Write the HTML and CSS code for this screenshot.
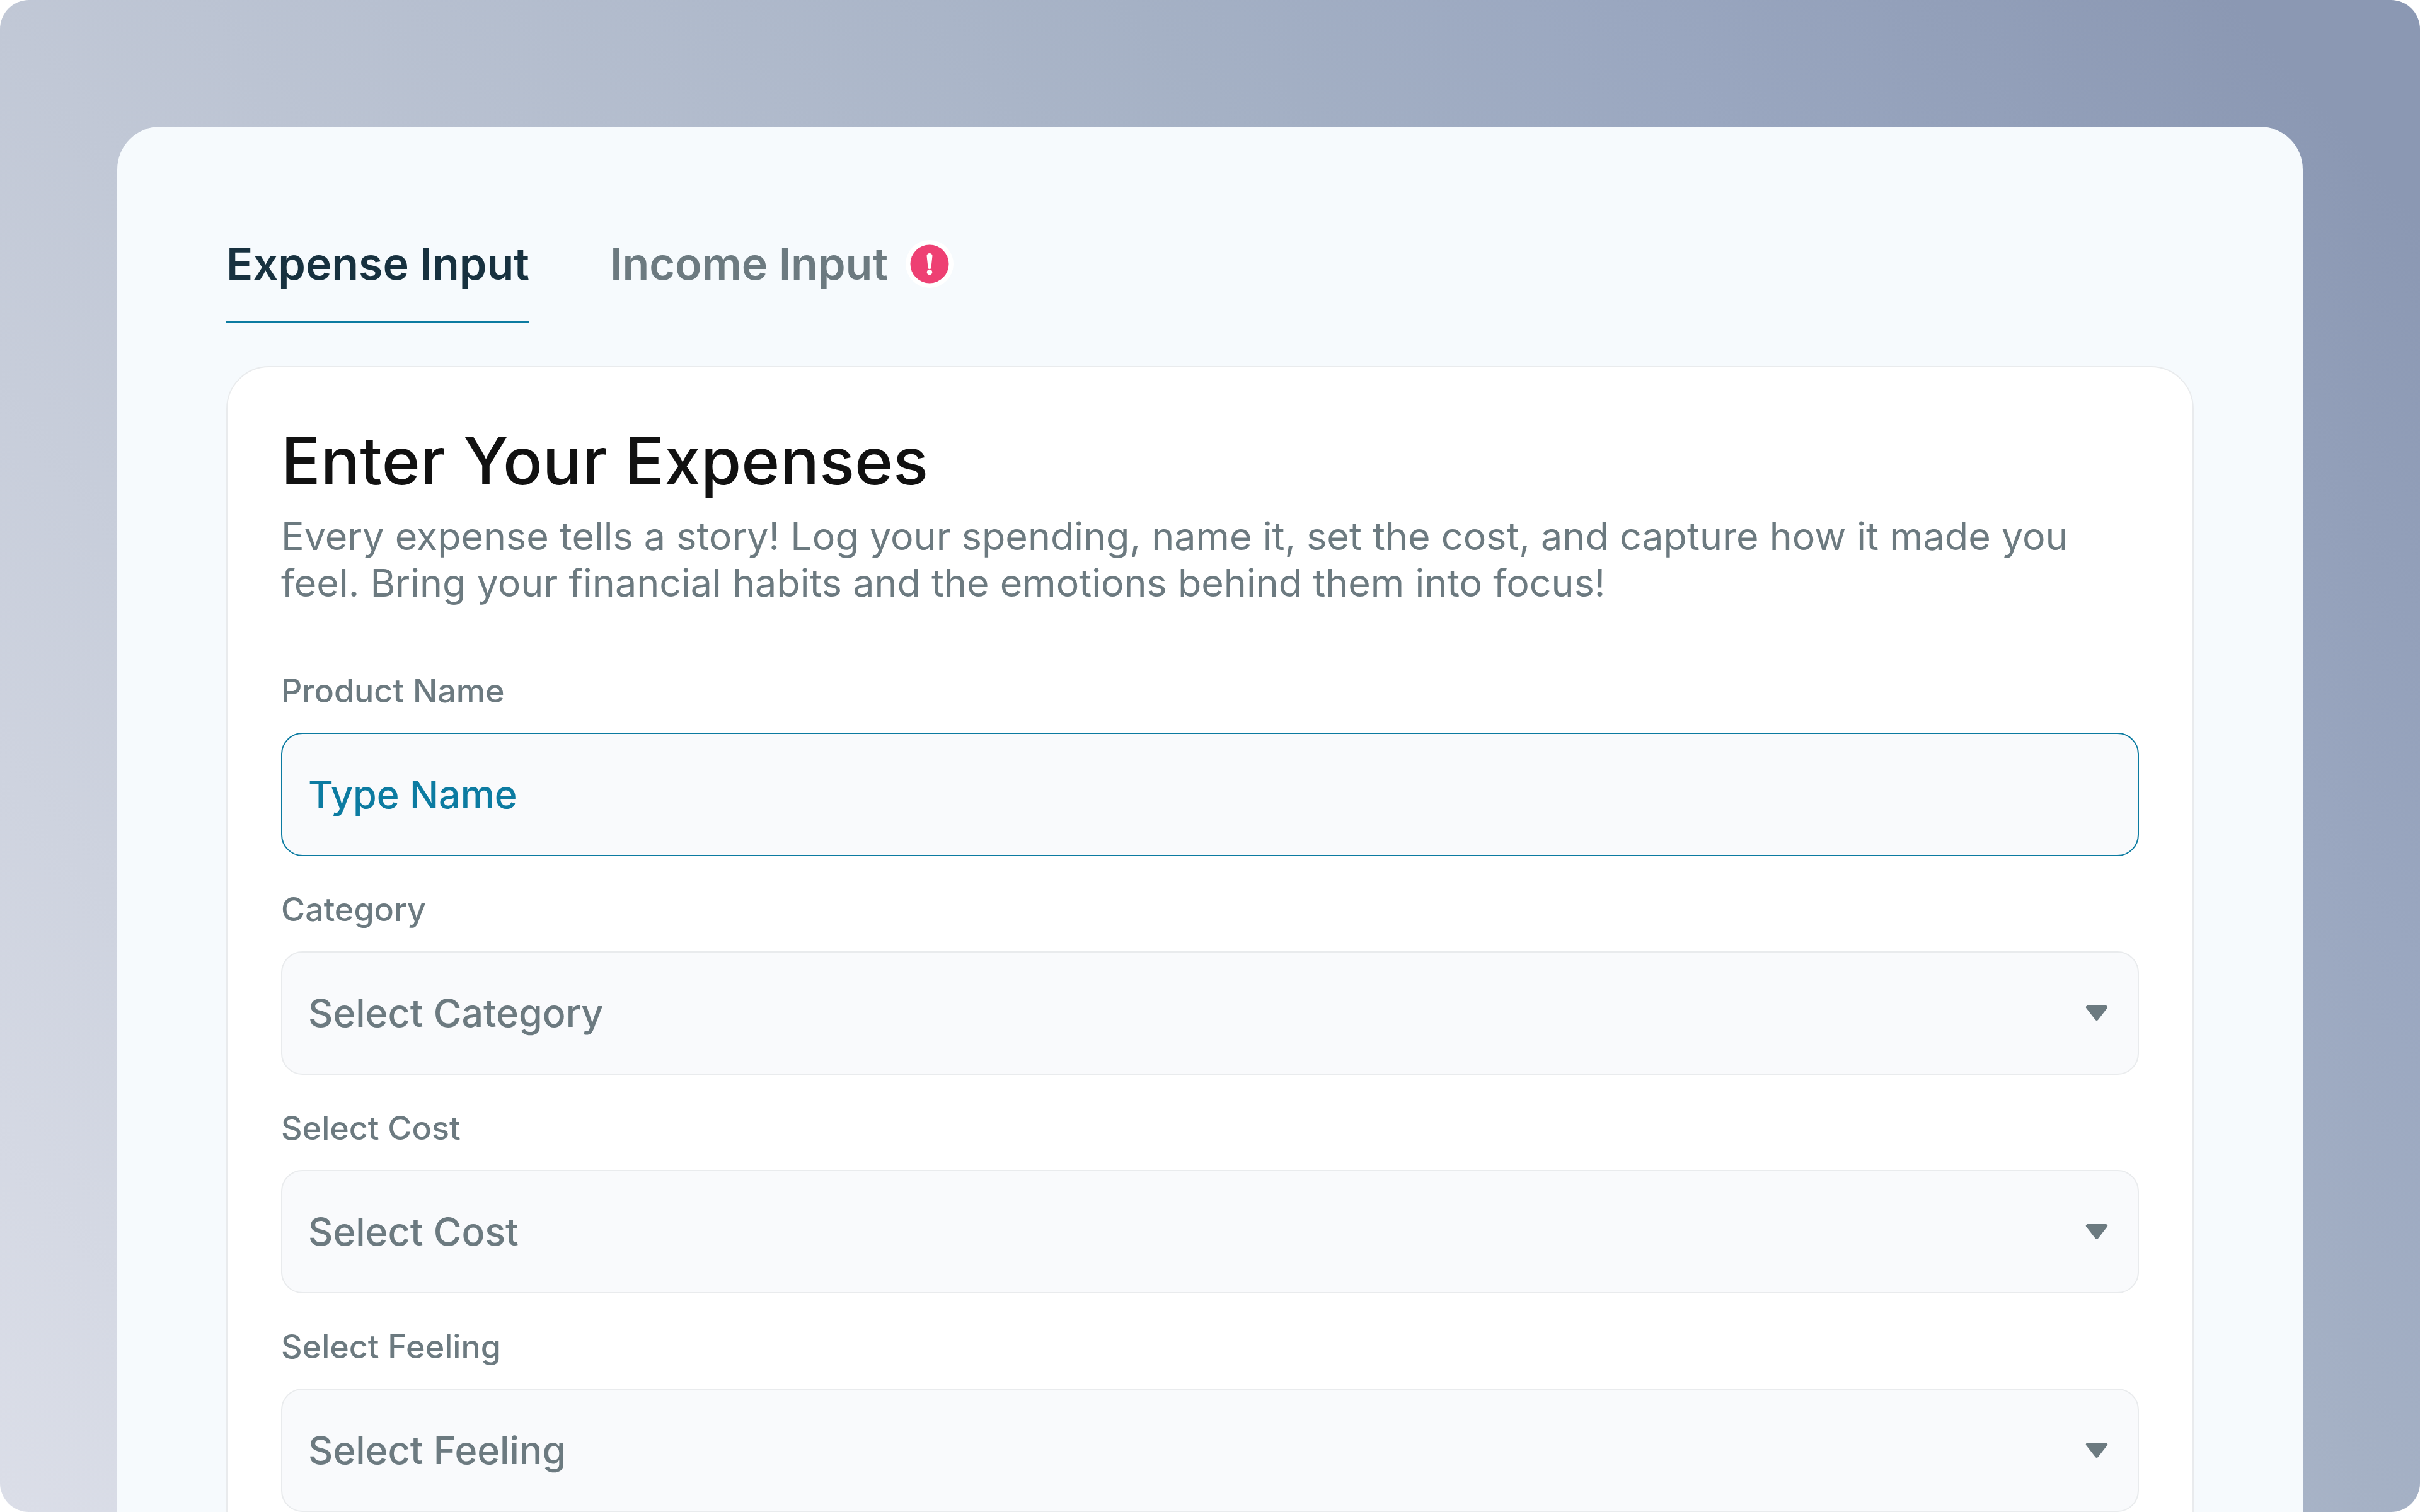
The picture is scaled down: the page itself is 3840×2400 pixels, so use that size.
FILE: index.html
```html
<!DOCTYPE html>
<html lang="en">
<head>
  <meta charset="UTF-8" />
  <meta name="viewport" content="width=device-width, initial-scale=1.0" />
  <title>Expense Input</title>
  <link rel="stylesheet" href="styles.css">
</head>
<body>

  <div class="backdrop">
    <main class="panel">

      <nav class="tabs">
        <a class="tab active" href="#expense">Expense Input</a>
        <a class="tab" href="#income">
          Income Input
          <svg class="badge" viewBox="0 0 76 76" role="img" aria-label="Needs attention">
            <circle cx="38" cy="38" r="38" fill="#fff"/>
            <circle cx="38" cy="38" r="30.5" fill="#ee4073"/>
            <path d="M33.5 25a4.5 4 0 0 1 9 0l-2 18.500a2.500 2.500 0 0 1-5 0z" fill="#fff"/>
            <circle cx="38" cy="51" r="4.300" fill="#fff"/>
          </svg>
        </a>
      </nav>

      <form class="card" id="expense">
        <h1>Enter Your Expenses</h1>
        <p class="intro">Every expense tells a story! Log your spending, name it, set the cost, and capture how it made you feel. Bring your financial habits and the emotions behind them into focus!</p>

        <div class="form-group">
          <label for="name">Product Name</label>
          <input class="control" type="text" id="name" placeholder="Type Name">
        </div>

        <div class="form-group">
          <label for="category">Category</label>
          <div class="select-wrap">
            <select class="control" id="category">
              <option>Select Category</option>
            </select>
            <svg class="arrow" viewBox="0 0 36 24"><path d="M3 0h30q4 2 1 5L20 23q-2 2-4 0L2 5q-3-3 1-5z"/></svg>
          </div>
        </div>

        <div class="form-group">
          <label for="cost">Select Cost</label>
          <div class="select-wrap">
            <select class="control" id="cost">
              <option>Select Cost</option>
            </select>
            <svg class="arrow" viewBox="0 0 36 24"><path d="M3 0h30q4 2 1 5L20 23q-2 2-4 0L2 5q-3-3 1-5z"/></svg>
          </div>
        </div>

        <div class="form-group">
          <label for="feeling">Select Feeling</label>
          <div class="select-wrap">
            <select class="control" id="feeling">
              <option>Select Feeling</option>
            </select>
            <svg class="arrow" viewBox="0 0 36 24"><path d="M3 0h30q4 2 1 5L20 23q-2 2-4 0L2 5q-3-3 1-5z"/></svg>
          </div>
        </div>
      </form>

    </main>
  </div>

</body>
</html>
```
FILE: styles.css
```css
* {
  box-sizing: border-box;
  font-family: Inter, sans-serif;
}

body {
  margin: 0;
  background-color: #fff;
  color: #6c7a80;
}

.backdrop {
  height: 100vh;
  overflow: hidden;
  padding: 201px 186px 0;
  border-radius: 46px;
  background: linear-gradient(50deg, #dbdee8, #c1c8d6 34%, #a5b1c5 65%, #9aa7c0 78%, #8b98b3 95%);
}

.panel {
  padding: 176px 173px 0;
  border-radius: 68px 68px 0 0;
  background-color: #f6fafd;
}

.tabs {
  display: flex;
  gap: 128px;
  margin-bottom: 68px;
}

.tab {
  display: flex;
  align-items: center;
  gap: 28px;
  padding-bottom: 48px;
  border-bottom: 4px solid transparent;
  font-size: 70px;
  font-weight: 600;
  line-height: 84px;
  color: #6c7a80;
  text-decoration: none;
}

.tab.active {
  color: #17313f;
  border-color: #0c7ba1;
}

.badge {
  width: 76px;
  height: 76px;
}

.card {
  padding: 85px;
  border: 2px solid #e9ebed;
  border-radius: 68px;
  background-color: #fff;
}

h1 {
  margin: 0 0 20px;
  font-size: 104px;
  font-weight: 500;
  line-height: 126px;
  color: #111;
}

.intro {
  margin: 0 0 103px;
  font-size: 61px;
  line-height: 74px;
}

.form-group {
  margin-bottom: 53px;
}

label {
  display: block;
  margin-bottom: 35px;
  font-size: 52px;
  font-weight: 500;
  line-height: 63px;
}

.control {
  display: block;
  width: 100%;
  height: 196px;
  padding: 0 41px;
  border: 2px solid #e9ebed;
  border-radius: 34px;
  background-color: #f9fafc;
  font-size: 61px;
  font-weight: 500;
  color: #6c7a80;
  appearance: none;
}

input.control {
  border-color: #0c7ba1;
}

input.control::placeholder {
  color: #0c7ba1;
  opacity: 1;
}

.select-wrap {
  display: grid;
  align-items: center;
}

.select-wrap > * {
  grid-area: 1 / 1;
}

.arrow {
  justify-self: end;
  width: 36px;
  height: 24px;
  margin-right: 49px;
  fill: #6c7a80;
  pointer-events: none;
}
```
